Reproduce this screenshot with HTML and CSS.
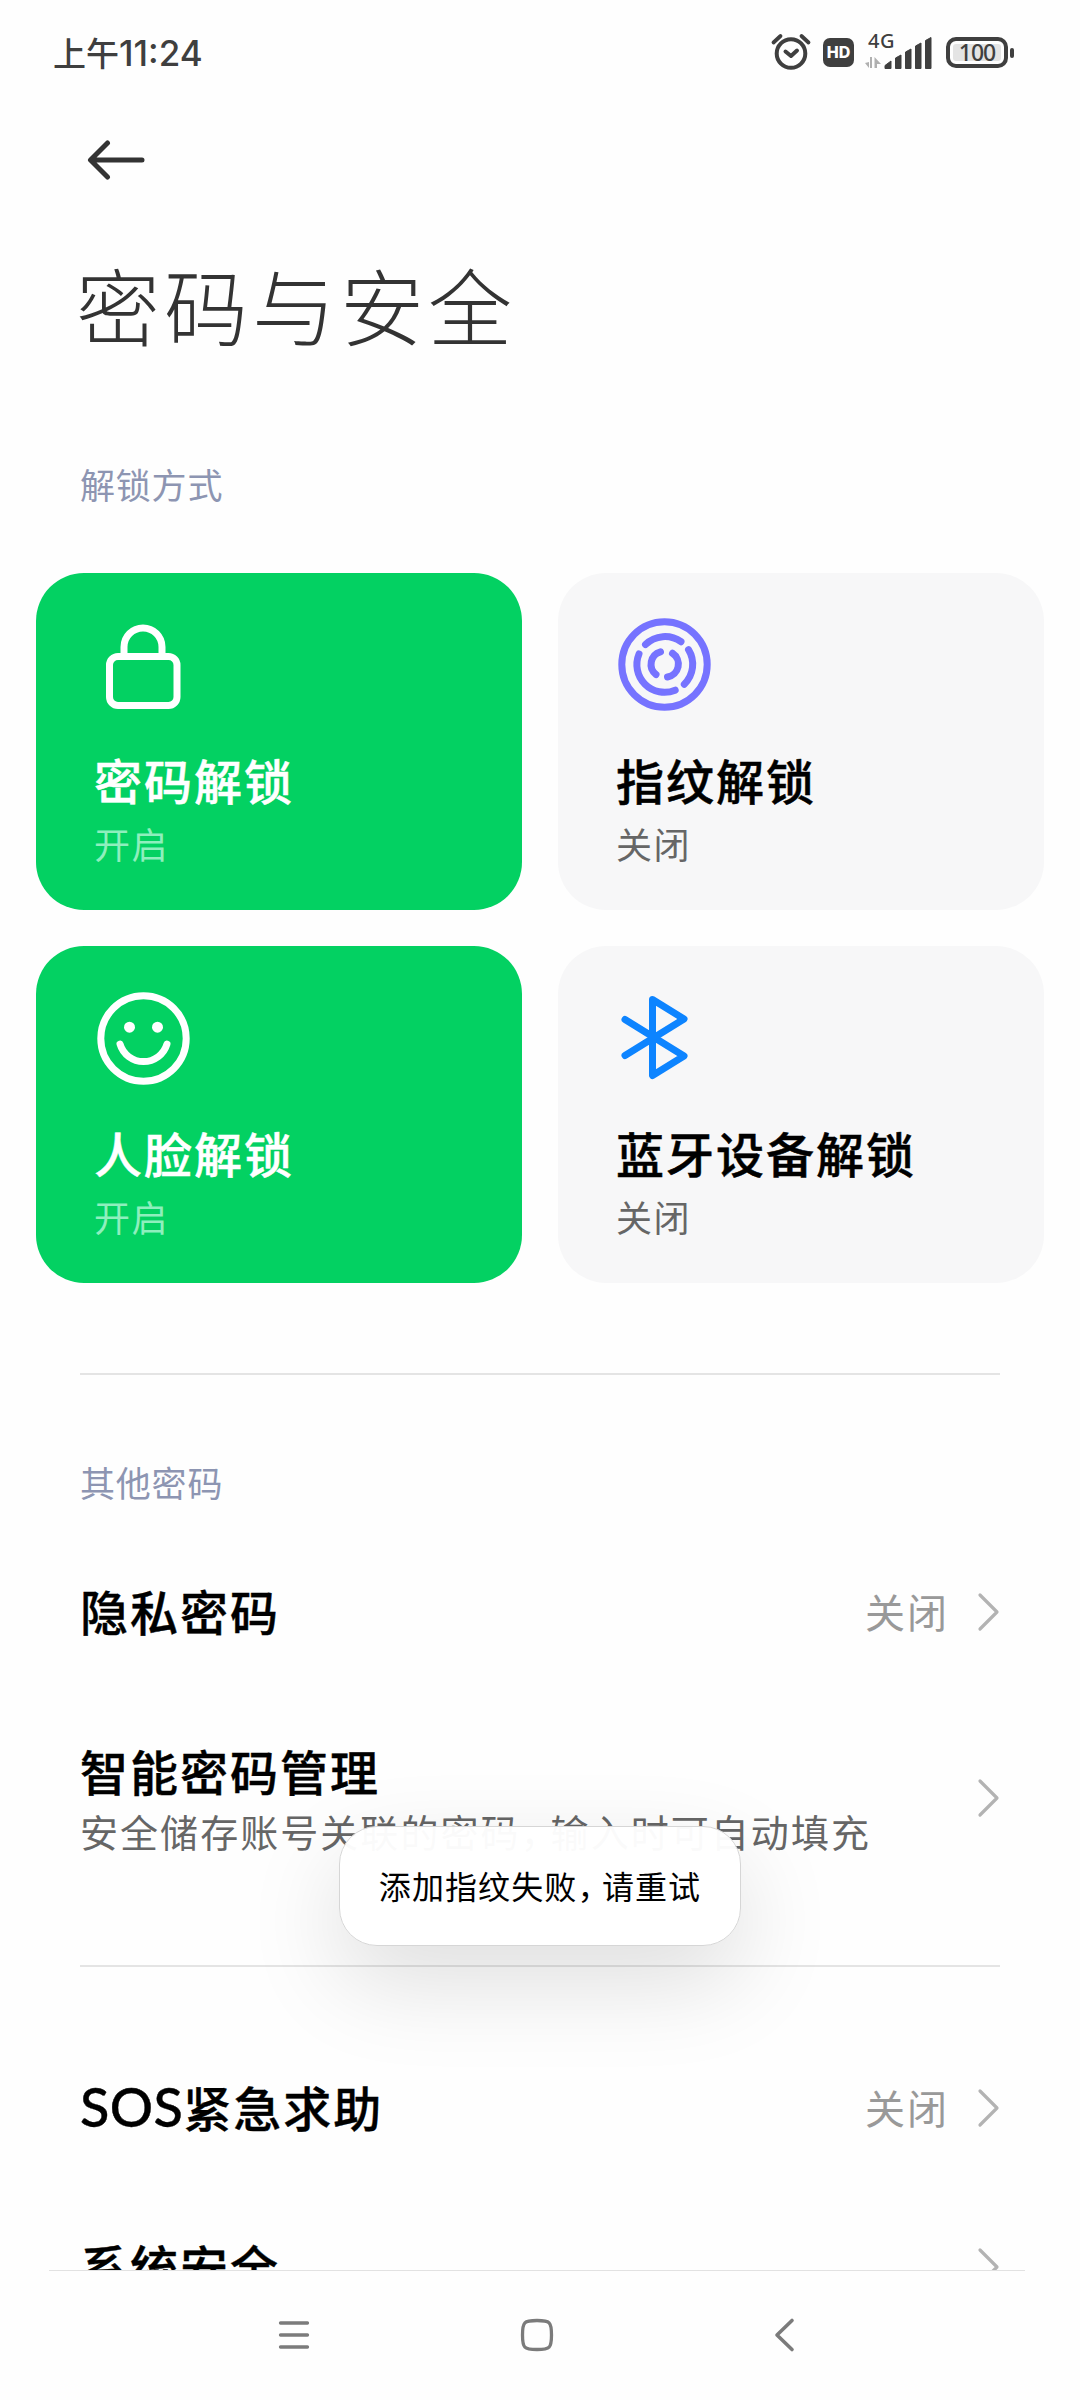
FILE: index.html
```html
<!DOCTYPE html>
<html lang="zh-CN">
<head>
<meta charset="utf-8">
<title>密码与安全</title>
<link rel="stylesheet" href="styles.css">
</head>
<body>
<div class="screen">
  <header class="status">
    <span class="clock">上午<span class="digits">11:24</span></span>
    <div class="status-icons">
      <svg class="alarm" width="42" height="40" viewBox="0 0 42 40" fill="none" stroke="#3f3f3f" stroke-linecap="round" stroke-linejoin="round">
        <circle cx="21" cy="21.500" r="14.300" stroke-width="4"/>
        <path d="M15.500 19.500 21 24l6-5.500" stroke-width="4"/>
        <path d="M3.500 10.500 10.500 4M38.500 10.500 31.500 4" stroke-width="3.800"/>
      </svg>
      <span class="hd">HD</span>
      <div class="signal">
        <span class="net">4G</span>
        <svg class="bars" width="68" height="34" viewBox="0 0 68 34">
          <path d="M4 26V32L0 27zM7 21v11H5V21zM9.500 32V21l6.500 7h-4v4z" fill="#b0b0b0"/>
          <g fill="#3f3f3f">
            <path d="M20 29.500 26 25v7.500h-6zM30.500 22l5.500-3v13.500h-5.500zM40.500 16l5.500-3v19.500h-5.500zM50.500 10l5.500-3v25.500h-5.500zM60.500 4.500l5.500-3v31h-5.500z" stroke="#3f3f3f" stroke-width="1" stroke-linejoin="round"/>
          </g>
        </svg>
      </div>
      <div class="battery"><span class="level">100</span></div>
    </div>
  </header>

  <nav class="topbar">
    <svg width="62" height="44" viewBox="0 0 62 44" fill="none" stroke="#333" stroke-width="5" stroke-linecap="round" stroke-linejoin="round">
      <path d="M55 22H4M20.500 5 3.500 22l17 17"/>
    </svg>
  </nav>
  <h1 class="title">密码与安全</h1>

  <h2 class="section first">解锁方式</h2>
  <div class="cards">
    <div class="card on">
      <svg class="icon" width="96" height="96" viewBox="0 0 96 96" fill="none" stroke="#fff" stroke-width="7">
        <path d="M30 40.500V31a19 19 0 0 1 38 0v9.500"/>
        <rect x="15.500" y="40.500" width="67.500" height="49" rx="8.500"/>
      </svg>
      <h3>密码解锁</h3><p>开启</p>
    </div>
    <div class="card">
      <svg class="icon" width="96" height="96" viewBox="0 0 96 96" fill="none" stroke="#7673ff" stroke-width="7" stroke-linecap="round">
        <circle cx="48.500" cy="48.500" r="42.700"/>
        <path d="M29.500 28.500A27.700 27.700 0 0 1 65 25.700M72.500 33.700A27.700 27.700 0 0 1 68.300 68.200M23 38A27.700 27.700 0 0 0 59.200 74.200"/>
        <path d="M44.500 35.800A13 13 0 0 0 40 58.500M56.500 37.300A13 13 0 0 1 51.500 61"/>
      </svg>
      <h3>指纹解锁</h3><p>关闭</p>
    </div>
    <div class="card on">
      <svg class="icon" width="96" height="96" viewBox="0 0 96 96" fill="none" stroke="#fff" stroke-width="7" stroke-linecap="round">
        <circle cx="49.500" cy="49.500" r="42.700"/>
        <path d="M26 55a24.500 24.500 0 0 0 47 0"/>
        <circle cx="35.500" cy="38.200" r="5.500" fill="#fff" stroke="none"/>
        <circle cx="63.500" cy="38.200" r="5.500" fill="#fff" stroke="none"/>
      </svg>
      <h3>人脸解锁</h3><p>开启</p>
    </div>
    <div class="card">
      <svg class="icon" width="96" height="96" viewBox="0 0 96 96" fill="none" stroke="#0d84ff" stroke-width="7" stroke-linecap="round" stroke-linejoin="round">
        <path d="M9 30.500 68 67 36.500 86.500V10.500L68 30 9 66.500"/>
      </svg>
      <h3>蓝牙设备解锁</h3><p>关闭</p>
    </div>
  </div>

  <hr class="rule">
  <h2 class="section second">其他密码</h2>
  <ul class="list">
    <li class="row r1"><div class="text"><h4>隐私密码</h4></div><span class="value">关闭</span><svg class="chev" width="24" height="40" viewBox="0 0 24 40"><path d="M3 3 20 20 3 37"/></svg></li>
    <li class="row r2"><div class="text"><h4>智能密码管理</h4><p>安全储存账号关联的密码<span class="comma">，</span>输入时可自动填充</p></div><svg class="chev" width="24" height="40" viewBox="0 0 24 40"><path d="M3 3 20 20 3 37"/></svg></li>
  </ul>
  <hr class="rule">
  <ul class="list tail">
    <li class="row r3"><div class="text"><h4><span class="latin">SOS</span>紧急求助</h4></div><span class="value">关闭</span><svg class="chev" width="24" height="40" viewBox="0 0 24 40"><path d="M3 3 20 20 3 37"/></svg></li>
    <li class="row r4"><div class="text"><h4>系统安全</h4></div><svg class="chev" width="24" height="40" viewBox="0 0 24 40"><path d="M3 3 20 20 3 37"/></svg></li>
  </ul>

  <div class="toast">添加指纹失败<span class="comma">，</span>请重试</div>

  <footer class="navbar">
    <svg width="34" height="36" viewBox="0 0 34 36" stroke="#7b7b7b" stroke-width="3.300" stroke-linecap="round"><path d="M3.500 6h27M3.500 18h27M3.500 30h27"/></svg>
    <svg width="36" height="36" viewBox="0 0 36 36" fill="none" stroke="#7b7b7b" stroke-width="3.300"><path d="M3.500 18C3.500 5 5 3.500 18 3.500S32.500 5 32.500 18 31 32.500 18 32.500 3.500 31 3.500 18z"/></svg>
    <svg class="back" width="24" height="36" viewBox="0 0 24 36" fill="none" stroke="#7b7b7b" stroke-width="3.600" stroke-linecap="round" stroke-linejoin="round"><path d="M19 3.500 4 18l15 14.500"/></svg>
  </footer>
</div>
</body>
</html>
```

FILE: styles.css
```css
* { box-sizing: border-box; margin: 0; padding: 0; }
body {
  background: #fdfdfd;
  font-family: "Noto Sans CJK SC", sans-serif;
}
h1, h2, h3, h4 { font-weight: 400; }
svg { display: block; flex: none; }
.screen {
  position: relative;
  width: 1080px;
  height: 2400px;
  overflow: hidden;
  display: flex;
  flex-direction: column;
  background: #fefefe;
}

.status {
  flex: none;
  height: 104px;
  padding: 0 66px 0 53px;
  display: flex;
  align-items: center;
  justify-content: space-between;
  color: #3f3f3f;
}
.clock { font-size: 33px; font-weight: 500; line-height: 50px; white-space: nowrap; }
.digits { font: 500 35px/50px Inter, sans-serif; }
.status-icons { display: flex; align-items: center; }
.alarm { margin-right: 1px; }
.hd {
  width: 31px; height: 29px; margin-left: 10px;
  border-radius: 7px; background: #3f3f3f; color: #fff;
  font: 800 16px/29px Inter, sans-serif; text-align: center;
}
.signal { position: relative; width: 68px; height: 40px; margin-left: 11px; }
.net { position: absolute; left: 3px; top: -1px; font: 500 20px/20px "Noto Sans", sans-serif; letter-spacing: .500px; }
.bars { position: absolute; left: 0; top: 4px; }
.battery {
  position: relative;
  width: 62px; height: 31px; margin-left: 13px; margin-right: 6px;
  border: 4px solid #3f3f3f; border-radius: 10px;
  padding: 3px;
}
.battery::after {
  content: ""; position: absolute; left: 60px; top: 7px;
  width: 4px; height: 10px; border-radius: 2px; background: #3f3f3f;
}
.level {
  display: block; height: 17px; background: #e4e4e4; border-radius: 3px;
  font: 500 23px/16px "Noto Sans", sans-serif; letter-spacing: -1px; text-align: center;
}

.topbar { flex: none; height: 112px; padding: 34px 0 0 87px; }
.title {
  flex: none; height: 184px; padding: 28px 0 0 76px;
  font-size: 84px; line-height: 120px; font-weight: 300; letter-spacing: 4px; color: #333;
}
.section { flex: none; padding-left: 80px; color: #8d95b2; font-size: 35px; letter-spacing: .800px; line-height: 50px; }
.section.first { height: 173px; padding-top: 59px; }
.cards {
  flex: none; display: grid; grid-template-columns: 486px 486px;
  grid-auto-rows: 337px; gap: 36px; padding: 0 36px;
}
.card { border-radius: 48px; background: #f7f7f8; padding: 43px 0 0 58px; }
.card.on { background: #03d162; color: #fff; }
.card h3 { font-size: 48px; line-height: 70px; letter-spacing: 2px; font-weight: 500; margin-top: 32px; -webkit-text-stroke: .500px; }
.card p { font-size: 36px; line-height: 54px; letter-spacing: 1.500px; color: #666; margin-top: 2px; }
.card.on p { color: #8eefbd; }
.rule { flex: none; border: 0; height: 2px; margin: 90px 80px 0; background: #e4e4e4; }
.section.second { height: 155px; padding-top: 82px; }
.list { flex: none; list-style: none; }
.row { display: flex; align-items: center; padding: 0 79px 0 80px; }
.row .text { flex: 1; padding-bottom: 5px; }
.row h4 { font-size: 48px; line-height: 66px; letter-spacing: 2px; font-weight: 500; color: #000; -webkit-text-stroke: .400px; }
.row p { font-size: 38px; line-height: 54px; letter-spacing: 2.050px; color: #666; white-space: nowrap; margin-top: 1px; }
.row .comma { letter-spacing: -8px; }
.value { font-size: 40px; line-height: 56px; letter-spacing: 2px; color: #999; margin: 0 28px 3px 0; }
.chev path { fill: none; stroke: #b3b3b3; stroke-width: 3.200; stroke-linecap: round; stroke-linejoin: round; }
.r1 { height: 164px; }
.r2 { height: 180px; margin-top: 14px; }
.r2 .text { padding-bottom: 1px; }
.list + .rule { margin-top: 77px; }
.tail { margin-top: 59px; }
.r3 { height: 164px; }
.r4 { height: 154px; }
.row .latin { font-family: Lato, sans-serif; font-size: 54px; letter-spacing: .400px; line-height: 60px; }

.toast {
  position: absolute; left: 339px; top: 1826px; width: 402px; height: 120px;
  border-radius: 38px; background: rgba(255,255,255,.97); border: 1px solid #d6d6d6;
  box-shadow: 0 35px 95px rgba(0,0,0,.13);
  font-size: 32px; line-height: 116px; letter-spacing: 1.100px; text-align: center; color: #000; white-space: nowrap;
}
.toast .comma { letter-spacing: -7.500px; }
.navbar {
  position: absolute; left: 0; right: 0; bottom: 0; height: 130px;
  background: #fefefe; display: flex; padding: 47px 0 0 277px;
}
.navbar::before { content: ""; position: absolute; left: 49px; right: 55px; top: 0; height: 1px; background: #e2e2e2; }
.navbar svg + svg { margin-left: 208px; }
.navbar svg.back { margin-left: 218px; }
```
